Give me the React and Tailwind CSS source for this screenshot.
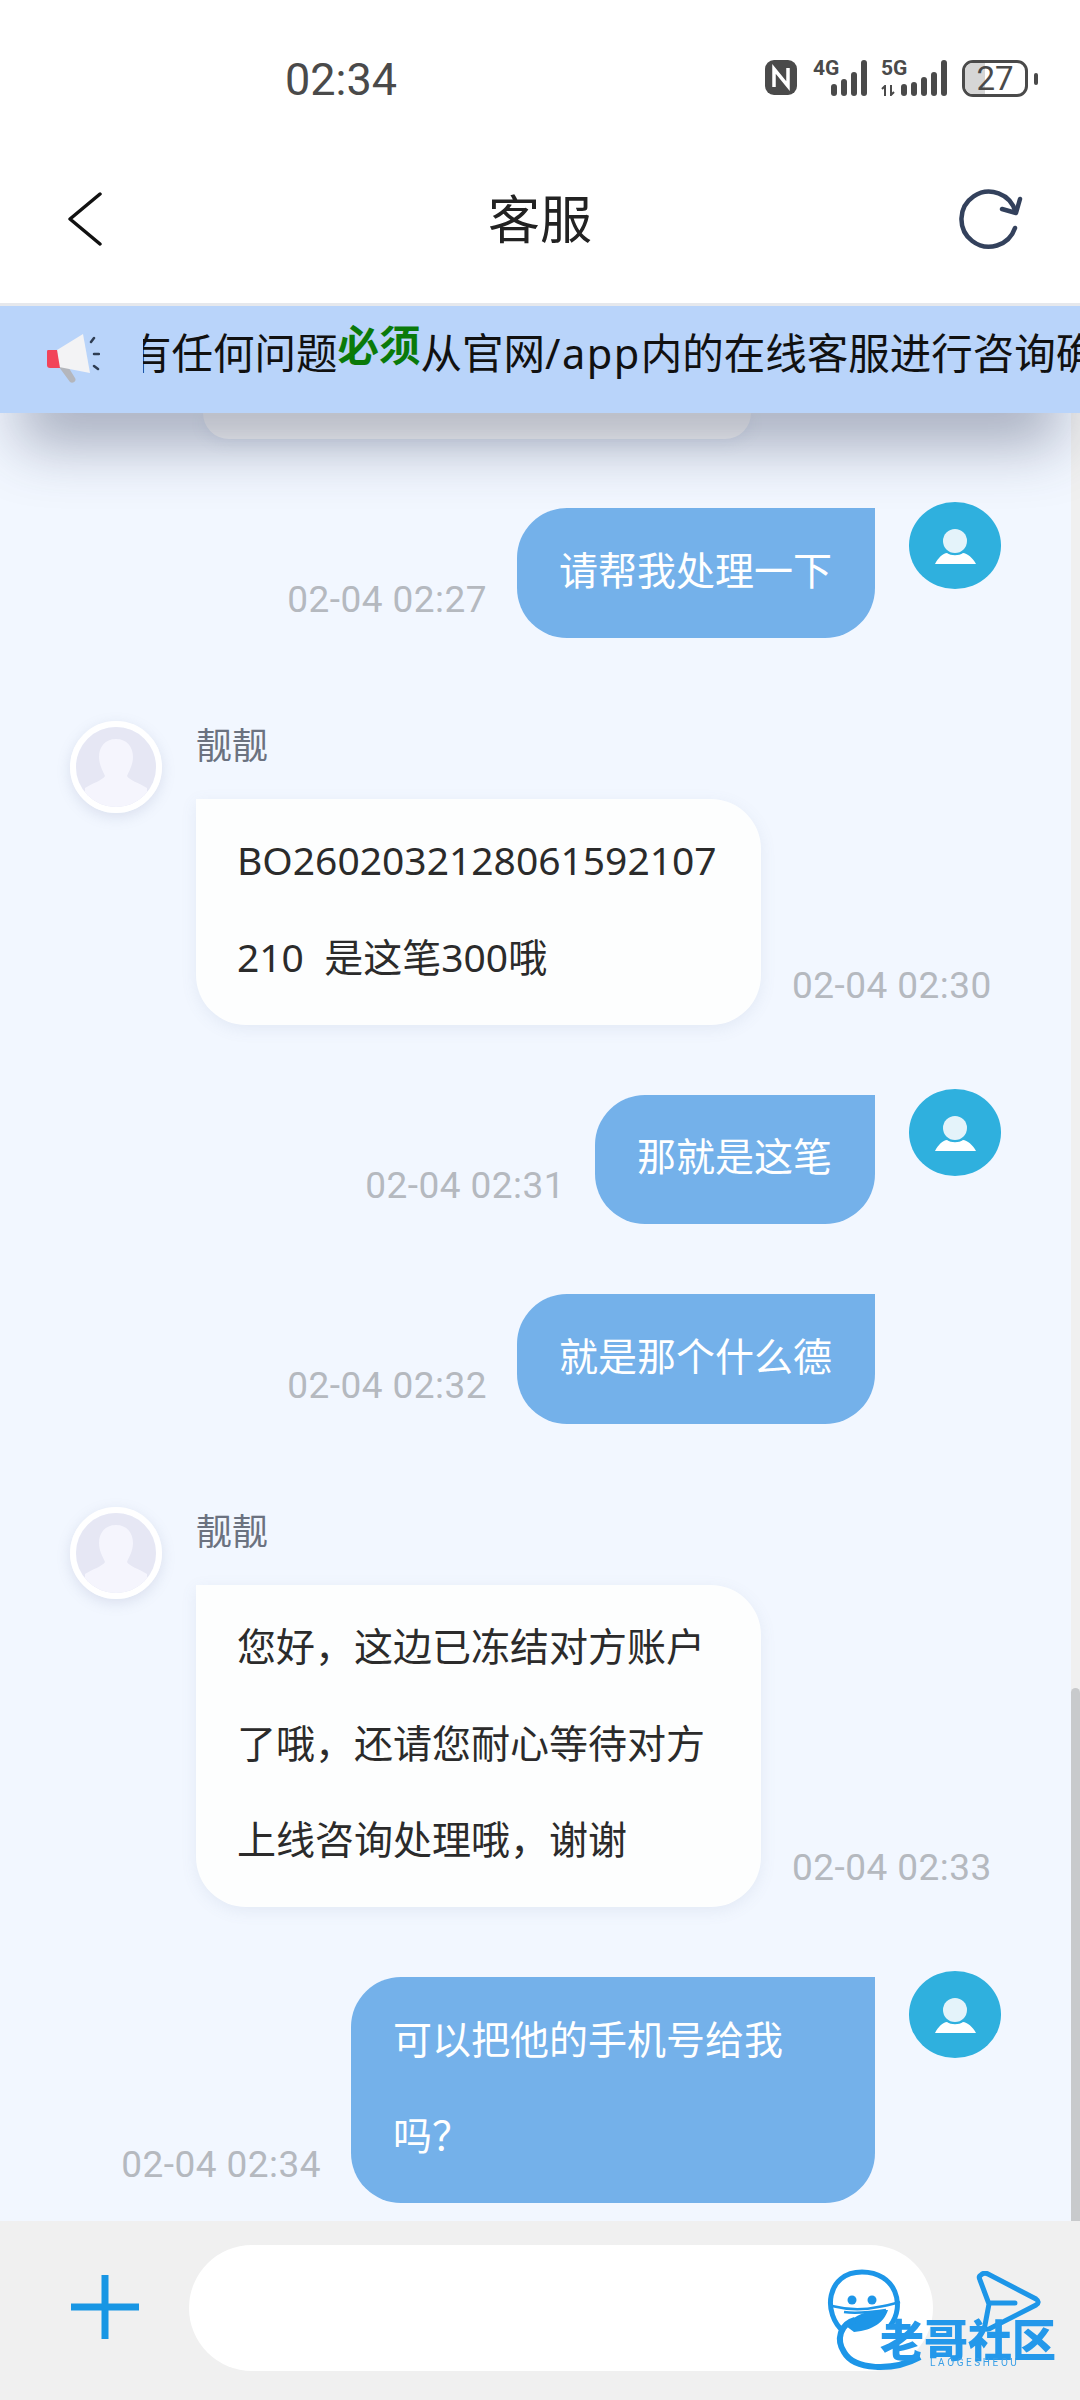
import React from 'react'

const uiFont = '[font-family:"Noto_Sans","Noto_Sans_CJK_SC",sans-serif]'

const messages = [
    { id: 1, side: 'right', text: '请帮我处理一下', time: '02-04 02:27', avatar: true },
    { id: 2, side: 'left', name: '靓靓', text: 'BO2602032128061592107210  是这笔300哦', time: '02-04 02:30' },
    { id: 3, side: 'right', text: '那就是这笔', time: '02-04 02:31', avatar: true },
    { id: 4, side: 'right', text: '就是那个什么德', time: '02-04 02:32' },
    { id: 5, side: 'left', name: '靓靓', text: '您好，这边已冻结对方账户了哦，还请您耐心等待对方上线咨询处理哦，谢谢', time: '02-04 02:33' },
    { id: 6, side: 'right', text: '可以把他的手机号给我吗？', time: '02-04 02:34', avatar: true, wide: true },
]

const Bars = ({ heights }) => (
    <div className="flex items-end gap-[4px]">
        {heights.map((h, i) => (
            <div key={i} className="w-[6px] rounded-full bg-[#4a4a4a]" style={{ height: h }} />
        ))}
    </div>
)

const StatusBar = () => (
    <div className="flex h-[150px] items-start pl-[285px] pr-[42px] pt-[52px]">
        <span className='text-[45px] leading-[55px] text-[#4a4a4a] [font-family:Roboto,sans-serif]'>02:34</span>
        <div className="ml-auto mt-[8px] flex items-start">
            <svg width="32" height="35" viewBox="0 0 32 35">
                <rect width="32" height="35" rx="9" fill="#4a4a4a" />
                <path d="M9 27V9l14 17V8" fill="none" stroke="#fff" strokeWidth="3.5" />
            </svg>
            <div className="relative ml-[16px] h-[36px] w-[54px]">
                <span className='absolute -top-[4px] left-0 text-[21px] font-bold leading-[24px] text-[#4a4a4a] [font-family:Roboto,sans-serif]'>4G</span>
                <div className="absolute bottom-0 right-0"><Bars heights={[12, 17, 24, 36]} /></div>
            </div>
            <div className="relative ml-[14px] h-[36px] w-[66px]">
                <span className='absolute -top-[4px] left-0 text-[21px] font-bold leading-[24px] text-[#4a4a4a] [font-family:Roboto,sans-serif]'>5G</span>
                <svg className="absolute bottom-0 left-0" width="15" height="11" viewBox="0 0 15 11">
                    <path d="M4 11V1L1 4M10 0v10l3-3" fill="none" stroke="#4a4a4a" strokeWidth="2" />
                </svg>
                <div className="absolute bottom-0 right-0"><Bars heights={[12, 14, 19, 24, 36]} /></div>
            </div>
            <div className="relative ml-[15px] flex h-[37px] w-[66px] items-center justify-center overflow-hidden rounded-[11px] border-[3px] border-[#4a4a4a]">
                <div className="absolute inset-y-0 left-0 w-[20px] bg-[#d6d6d6]" />
                <span className='relative text-[33px] leading-[31px] text-[#4a4a4a] [font-family:Roboto,sans-serif]'>27</span>
            </div>
            <div className="ml-[6px] mt-[13px] h-[12px] w-[4px] rounded-full bg-[#4a4a4a]" />
        </div>
    </div>
)

const NavBar = () => (
    <div className="grid h-[153px] grid-cols-[1fr_auto_1fr] items-center px-[68px] pb-[15px]">
        <svg width="34" height="54" viewBox="0 0 34 54">
            <path d="M32 2 2 27l30 25" fill="none" stroke="#111" strokeWidth="3.5" strokeLinejoin="round" strokeLinecap="round" />
        </svg>
        <span className={`text-[52px] leading-[64px] text-[#222] ${uiFont}`}>客服</span>
        <svg className="-mr-[12px] justify-self-end" width="68" height="66" viewBox="16 16 68 66">
            <path d="M75 58A27.500 27.500 0 1 1 75.500 42" fill="none" stroke="#33415c" strokeWidth="4.500" strokeLinecap="round" />
            <path d="M80 29 76 43 62 39" fill="none" stroke="#33415c" strokeWidth="4.500" strokeLinecap="round" strokeLinejoin="round" />
        </svg>
    </div>
)

const Banner = () => (
    <div className="relative z-10 flex h-[110px] items-center border-t-[3px] border-[#e6e8ec] bg-[#b9d4fa] shadow-[0_50px_60px_-20px_rgba(50,60,90,0.42)]">
        <svg className="ml-[44px] shrink-0" width="56" height="54" viewBox="0 0 56 54">
            <path d="M15 34l8-2 8 13c2 3-2 6-5 4z" fill="#b4b6bc" />
            <path d="M13 17 39 1l7 39-31-6z" fill="#f3f3f5" />
            <path d="M4 17h9l3 18H6c-2 0-3-1-3-3V20c0-2 0-3 1-3z" fill="#f2445a" />
            <path d="M47 9l3-4M50 21h5M50 33l4 3" stroke="#2f3d52" strokeWidth="2.500" strokeLinecap="round" />
        </svg>
        <div className="ml-[43px] min-w-0 flex-1 overflow-hidden">
            <p className={`-ml-[13px] whitespace-nowrap pb-[14px] text-[41.500px] leading-[60px] text-[#111] ${uiFont}`}>
                有任何问题<b className="relative -top-[8px] font-bold text-[#0a7a0a]">必须</b>从官网<span className="tracking-[1.500px]">/app</span>内的在线客服进行咨询确认
            </p>
        </div>
    </div>
)

const UserAvatar = () => (
    <svg className="shrink-0" width="92" height="87" viewBox="0 0 92 87">
        <ellipse cx="46" cy="43.500" rx="46" ry="43.500" fill="#2fb0de" />
        <circle cx="46" cy="39" r="12" fill="#e4f3fa" />
        <path d="M26 62c3-6 8-11 12-11 4 3 12 3 16 0 4 0 10 5 13 11z" fill="#fff" />
    </svg>
)

const StaffAvatar = () => (
    <div className="flex h-[92px] w-[92px] shrink-0 overflow-hidden rounded-full border-[6px] border-white shadow-[0_4px_14px_rgba(110,120,160,0.18)]">
        <svg width="80" height="80" viewBox="0 0 80 80">
            <rect width="80" height="80" fill="#e6e7f4" />
            <path d="M40 12c11 0 17 8 17 18 0 8-4 14-6 19 2 4 12 7 20 12v19H9V61c8-5 18-8 20-12-2-5-6-11-6-19 0-10 6-18 17-18z" fill="#f5f5fd" />
        </svg>
    </div>
)

const TimeLabel = ({ children, className }) => (
    <span className={`whitespace-nowrap text-[37px] leading-[44px] tracking-[0.45px] text-[#b5b9bf] [font-family:Roboto,sans-serif] ${className}`}>{children}</span>
)

const Message = ({ message }) => {
    if (message.side === 'left') {
        return (
            <div className="mt-[83px] flex items-start gap-[34px] pl-[70px]">
                <StaffAvatar />
                <div>
                    <p className={`mb-[28px] text-[36px] leading-[50px] text-[#6b7280] ${uiFont}`}>{message.name}</p>
                    <div className="flex items-end gap-[31px]">
                        <div className={`w-[565px] whitespace-pre-wrap break-all rounded-bl-[50px] rounded-br-[50px] rounded-tr-[50px] bg-[#fdfefe] pb-[19.500px] pl-[41px] pr-[42px] pt-[13.500px] text-[39px] leading-[96.5px] text-[#2b2b2b] shadow-[0_4px_16px_rgba(100,120,160,0.1)] ${uiFont}`}>
                            {message.text}
                        </div>
                        <TimeLabel className="mb-[17px]">{message.time}</TimeLabel>
                    </div>
                </div>
            </div>
        )
    }

    return (
        <div className="mt-[64px] flex items-start justify-end gap-[34px] pr-[70px]">
            <div className="flex items-end gap-[30px] pt-[6px]">
                <TimeLabel className="mb-[16px]">{message.time}</TimeLabel>
                <div className={`rounded-bl-[50px] rounded-br-[50px] rounded-tl-[50px] bg-[#74b1ea] pb-[19.500px] pl-[42px] pr-[43px] pt-[13.500px] text-[39px] leading-[96.5px] text-white ${message.wide ? 'w-[524px]' : ''} ${uiFont}`}>
                    {message.text}
                </div>
            </div>
            {message.avatar ? <UserAvatar /> : <div className="h-[87px] w-[92px] shrink-0" />}
        </div>
    )
}

const Watermark = () => (
    <div className="pointer-events-none absolute bottom-[23px] left-[820px] h-[115px] w-[250px] blur-[0.6px]">
        <svg className="absolute left-0 top-0" width="130" height="115" viewBox="0 0 130 115">
            <path d="M24 70C2 52 6 10 42 10c34 0 44 34 28 54" fill="none" stroke="#1d96e8" strokeWidth="5" />
            <circle cx="32" cy="38" r="4.500" fill="#1d96e8" />
            <circle cx="52" cy="38" r="4.500" fill="#1d96e8" />
            <path d="M12 44c16 4 32 4 46 1 8-1 15-3 22-5M24 50c14 2 28 0 42-2" fill="none" stroke="#1d96e8" strokeWidth="2.500" />
            <path d="M26 64c8-12 22-16 42-16-4 12-14 20-34 22z" fill="#1d96e8" />
            <path d="M35 58C20 62 16 78 24 90c10 18 48 20 76 5" fill="none" stroke="#1d96e8" strokeWidth="6" />
        </svg>
        <p className={`absolute left-[60px] top-[60px] whitespace-nowrap text-[44px] font-black leading-[36px] text-[#2498ea] ${uiFont}`}>老哥社区</p>
        <p className='absolute left-[110px] top-[96px] whitespace-nowrap text-[10px] leading-[10px] tracking-[2.6px] text-[#3a9fe6] [font-family:Roboto,sans-serif]'>LAOGESHEOU</p>
    </div>
)

const InputBar = () => (
    <div className="flex h-[179px] shrink-0 items-start gap-[42px] bg-[#f0f0f0] pl-[71px] pt-[24px]">
        <svg className="mr-[8px] mt-[30px] shrink-0" width="68" height="64" viewBox="0 0 68 64">
            <path d="M34 0v64M0 32h68" stroke="#1896e4" strokeWidth="7" />
        </svg>
        <div className="h-[126px] w-[744px] rounded-full bg-white" />
        <svg className="mt-[26px] shrink-0" width="66" height="62" viewBox="0 0 66 62">
            <path d="M6 4c2-2 5-2 7-1l48 25c3 2 3 4 0 6L14 58c-3 1-5-1-4-4l4-21-9-24c-1-2-1-4 1-5zM15 32h25" fill="none" stroke="#1d96e8" strokeWidth="5" strokeLinecap="round" />
        </svg>
    </div>
)

const App = () => {
    return (
        <div className="relative flex h-[2400px] w-[1080px] flex-col overflow-hidden bg-white">
            <StatusBar />
            <NavBar />
            <Banner />
            <div className="flex min-h-0 flex-1">
                <div className="min-w-0 flex-1 overflow-hidden bg-[#f2f7ff]">
                    <div className="ml-[203px] h-[26px] w-[548px] rounded-b-[50px] bg-white shadow-[0_4px_16px_rgba(100,120,160,0.1)]" />
                    <div className="-mt-[1px]">
                        {messages.map(message => <Message key={message.id} message={message} />)}
                    </div>
                </div>
                <div className="flex w-[9px] shrink-0 flex-col justify-end bg-[#f0f0f0]">
                    <div className="h-[533px] rounded-t-[6px] bg-[#c8cacc]" />
                </div>
            </div>
            <InputBar />
            <Watermark />
        </div>
    )
}

export default App
